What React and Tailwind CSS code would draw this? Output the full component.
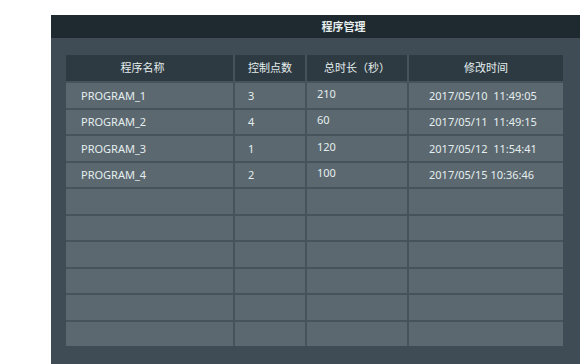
const programs = [
  { name: 'PROGRAM_1', points: '3', duration: '210', modified: '2017/05/10\u00a0\u00a011:49:05' },
  { name: 'PROGRAM_2', points: '4', duration: '60', modified: '2017/05/11\u00a0\u00a011:49:15' },
  { name: 'PROGRAM_3', points: '1', duration: '120', modified: '2017/05/12\u00a0\u00a011:54:41' },
  { name: 'PROGRAM_4', points: '2', duration: '100', modified: '2017/05/15 10:36:46' },
];

const TOTAL_ROWS = 10;

export default function App() {
  const rows = [...programs];
  while (rows.length < TOTAL_ROWS) rows.push(null);

  return (
    <div
      className="w-[580px] h-[364px] bg-white pt-[15px] pl-[51px] overflow-hidden"
      style={{ fontFamily: '"Noto Sans", "Noto Sans CJK SC", sans-serif' }}
    >
      <div className="h-full bg-[#3f4c56] flex flex-col">
        {/* Title bar */}
        <div className="h-[23px] bg-[#1f2a30] flex items-center justify-center pl-[56px]">
          <span className="text-[11px] font-bold text-[#e6eeee] leading-none">程序管理</span>
        </div>

        {/* Program table */}
        <div className="pt-[17px] pl-[15px]">
          <div className="w-[497px] grid grid-cols-[167px_70px_100px_154px] gap-[2px] bg-[#46535c] text-[11px] text-[#e4eeee]">
            <div className="h-[26px] bg-[#2e3a42] flex items-center justify-center pr-[14px]">程序名称</div>
            <div className="h-[26px] bg-[#2e3a42] flex items-center justify-center">控制点数</div>
            <div className="h-[26px] bg-[#2e3a42] flex items-center justify-center">总时长（秒）</div>
            <div className="h-[26px] bg-[#2e3a42] flex items-center justify-center">修改时间</div>

            {rows.map((row, i) => (
              <div key={i} className="contents">
                <div className="h-[24.5px] bg-[#5c6870] flex items-center pl-[15px] pt-[1px]">{row?.name}</div>
                <div className="h-[24.5px] bg-[#5c6870] flex items-center pl-[13px] pt-[1px]">{row?.points}</div>
                <div className="h-[24.5px] bg-[#5c6870] flex items-center pl-[10px] pb-[3px]">{row?.duration}</div>
                <div className="h-[24.5px] bg-[#5c6870] flex items-center pl-[20px] pt-[1px]">{row?.modified}</div>
              </div>
            ))}
          </div>
        </div>
      </div>
    </div>
  );
}
